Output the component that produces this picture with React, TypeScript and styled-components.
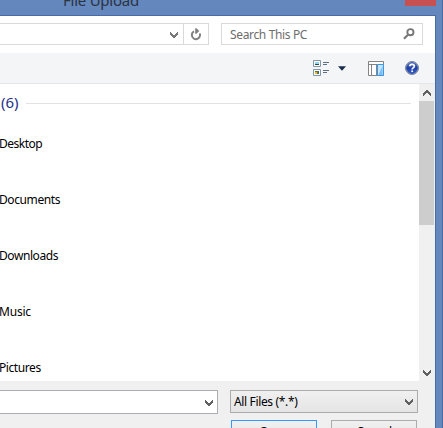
import React from "react";
import styled, { createGlobalStyle } from "styled-components";

const GlobalStyle = createGlobalStyle`
  html, body { margin: 0; padding: 0; overflow: hidden; }
  body { font-family: "Noto Sans", "Open Sans", sans-serif; font-size: 12px; color: #000; }
  * { box-sizing: border-box; }
  svg { display: block; flex: none; }
`;

const Window = styled.div`
  width: 443px;
  height: 428px;
  overflow: hidden;
  display: flex;
  flex-direction: column;
  background: #6487bd;
  border-right: 1px solid #486ca5;
`;

const TitleBar = styled.header`
  height: 15px;
  flex: none;
  display: flex;
  justify-content: space-between;
  padding: 0 6px 0 63px;
`;

const Title = styled.span`
  font-size: 15px;
  line-height: 20px;
  height: 20px;
  margin-top: -10px;
  letter-spacing: -0.25px;
  color: #2b3442;
  white-space: nowrap;
`;

const CloseButton = styled.button`
  width: 31px;
  height: 6px;
  padding: 0;
  border: 0;
  background: #c75050;
`;

const Client = styled.main`
  width: 436px;
  height: 413px;
  flex: none;
  display: flex;
  flex-direction: column;
  background: #fff;
  border-top: 1px solid #486ca5;
  border-right: 1px solid #486ca5;
`;

const AddressRow = styled.div`
  height: 37px;
  flex: none;
  display: flex;
  padding-top: 7px;
`;

const Address = styled.div`
  width: 209px;
  height: 22px;
  display: flex;
  border: 1px solid #d9d9d9;
  border-left: 0;
`;

const AddressField = styled.div`
  width: 184px;
  display: flex;
  align-items: center;
  justify-content: flex-end;
  padding: 1px 5px 0 0;
  border-right: 1px solid #d9d9d9;
`;

const Refresh = styled.div`
  flex: 1;
  display: flex;
  align-items: center;
  justify-content: center;
`;

const Search = styled.div`
  width: 202px;
  height: 22px;
  margin-left: 12px;
  padding: 0 7px 0 8px;
  display: flex;
  align-items: center;
  justify-content: space-between;
  border: 1px solid #d9d9d9;
  color: #6d6d6d;
`;

const Toolbar = styled.div`
  height: 31px;
  flex: none;
  display: flex;
  align-items: center;
  padding-left: 313px;
  background: #f4f5f7;
  border-bottom: 1px solid #e5e7ea;
`;

const ToolIcon = styled.span<{ $gap: number }>`
  margin-right: ${(p) => p.$gap}px;
`;

const Browser = styled.section`
  height: 297px;
  flex: none;
  display: flex;
`;

const Files = styled.div`
  width: 419px;
  overflow: hidden;
`;

const GroupHeader = styled.div`
  height: 38px;
  display: flex;
  align-items: center;
  padding-left: 1px;
`;

const Count = styled.span`
  width: 25px;
  font-size: 15px;
  line-height: 20px;
  padding-bottom: 2px;
  letter-spacing: -0.1px;
  color: #1e3287;
`;

const Rule = styled.div`
  width: 385px;
  height: 1px;
  background: #e2e2e2;
`;

const FileItem = styled.div`
  height: 56px;
  line-height: 18px;
  padding-top: 13px;
  margin-left: -1px;
`;

const Text = styled.span<{ $spacing?: number }>`
  white-space: nowrap;
  letter-spacing: ${(p) => p.$spacing ?? 0}px;
`;

const Scrollbar = styled.div`
  width: 16px;
  display: flex;
  flex-direction: column;
  align-items: flex-start;
  background: #f0f0f0;
`;

const ScrollArrow = styled.div`
  width: 15px;
  height: 17px;
  flex: none;
  display: flex;
  align-items: center;
  justify-content: center;
`;

const Track = styled.div`
  width: 15px;
  flex: 1;
`;

const Thumb = styled.div`
  height: 124px;
  background: #cdcdcd;
`;

const Footer = styled.footer`
  flex: 1;
  overflow: hidden;
  padding-top: 9px;
  background: #f0f0f0;
`;

const Fields = styled.div`
  height: 30px;
  display: flex;
  align-items: flex-start;
`;

const NameField = styled.div`
  width: 218px;
  height: 24px;
  display: flex;
  align-items: center;
  justify-content: flex-end;
  padding: 1px 4px 0 0;
  background: #fff;
  border: 1px solid #abadb3;
  border-left: 0;
`;

const TypeSelect = styled.div`
  width: 188px;
  height: 23px;
  margin-left: 12px;
  padding: 0 4px 0 3px;
  display: flex;
  align-items: center;
  justify-content: space-between;
  background: linear-gradient(#f0f0f0, #e5e5e5);
  border: 1px solid #acacac;
`;

const Actions = styled.div`
  display: flex;
  gap: 14px;
  padding-left: 231px;
`;

const Action = styled.button<{ $primary?: boolean }>`
  width: 86px;
  height: 23px;
  padding: 0;
  font: inherit;
  letter-spacing: -0.3px;
  line-height: 21px;
  color: #000;
  background: linear-gradient(#f0f0f0, #e5e5e5);
  border: 1px solid ${(p) => (p.$primary ? "#3399ff" : "#acacac")};
`;

const Chevron = ({ up = false, color = "#606060" }: { up?: boolean; color?: string }) => (
  <svg width="8" height="6" viewBox="0 0 8 6" fill={color} shapeRendering="crispEdges">
    <path
      transform={up ? "matrix(1 0 0 -1 0 6)" : undefined}
      d="M0 0h1v1h1v1h1v1h2v-1h1v-1h1v-1h1v3h-1v1h-1v1h-1v1h-2v-1h-1v-1h-1v-1h-1z"
    />
  </svg>
);

const RefreshIcon = () => (
  <svg width="12" height="13" viewBox="0 0 12 13" fill="none" stroke="#808080">
    <path d="M4 3.400A4.100 4.100 0 1 0 10 7.200V5.600" strokeWidth="2" />
    <path d="M5.200 0.300H6.500L9.300 3 6.500 5.800H5.200Z" fill="#808080" stroke="none" />
  </svg>
);

const SearchIcon = () => (
  <svg width="12" height="12" viewBox="0 0 12 12" fill="none" stroke="#777">
    <circle cx="7.4" cy="4.2" r="3.1" strokeWidth="1.9" />
    <path d="M5 6.8L1 10.8" strokeWidth="2.2" />
  </svg>
);

const ViewIcon = () => (
  <svg width="17" height="16" viewBox="0 0 17 16">
    <g fill="#fff" stroke="#8495a8">
      <path d="M.5.5h7v6h-7zM.5 9.500h7v6h-7z" />
    </g>
    <path d="M2 2h4v2H2z" fill="#91d5ef" />
    <path d="M2 4h4v1H2z" fill="#294b4a" />
    <path d="M2 11h2v1H2zM4 13h2v1H4z" fill="#258b35" />
    <path d="M4 11h1v2H4z" fill="#df4937" />
    <path d="M2 12h2v2H2z" fill="#e8bb2a" />
    <path d="M5 11h1v2H5z" fill="#275dbd" />
    <path d="M10 2.500h6M10 4.500h4M10 10.500h6M10 12.500h4" stroke="#5d6f86" />
  </svg>
);

const DropIcon = () => (
  <svg width="8" height="5" viewBox="0 0 8 5">
    <path d="M0 .3h8L4 4.700z" fill="#172c4c" />
  </svg>
);

const PaneIcon = () => (
  <svg width="16" height="15" viewBox="0 0 16 15">
    <path d="M.5.5h15v14H.5z" fill="#fff" stroke="#858585" />
    <path d="M1 3.500h14M3.500 4v10M8.500 4v10" stroke="#858585" fill="none" />
    <path d="M9.500 3.500h6v11h-6z" fill="#c2e4ff" stroke="#3b97e6" />
    <path d="M14.500 5v9h-4z" fill="#79bdf7" />
  </svg>
);

const HelpIcon = () => (
  <svg width="14" height="14" viewBox="0 0 14 14">
    <defs>
      <linearGradient id="help" x1="0" y1="0" x2="0" y2="1">
        <stop offset="0" stopColor="#6f8bd8" />
        <stop offset=".5" stopColor="#1d3da8" />
        <stop offset="1" stopColor="#3a66cf" />
      </linearGradient>
    </defs>
    <circle cx="7" cy="7" r="6.500" fill="#c9d1df" stroke="#76839b" />
    <circle cx="7" cy="7" r="5.500" fill="url(#help)" stroke="#263e97" strokeWidth=".7" />
    <path d="M4.800 5.300c.1-2.700 4.500-2.500 4.500-.1C9.300 6.800 7.100 6.800 7.100 8.400" fill="none" stroke="#fff" strokeWidth="1.600" />
    <path d="M6.300 9.400h1.700V11H6.300z" fill="#fff" />
  </svg>
);

const files = [
  { name: "Desktop", spacing: -0.5 },
  { name: "Documents", spacing: -0.4 },
  { name: "Downloads", spacing: -0.42 },
  { name: "Music", spacing: -0.2 },
  { name: "Pictures", spacing: -0.42 },
];

export default function App() {
  return (
    <>
      <GlobalStyle />
      <Window>
        <TitleBar>
          <Title>File Upload</Title>
          <CloseButton aria-label="Close" />
        </TitleBar>
        <Client>
          <AddressRow>
            <Address>
              <AddressField><Chevron color="#777" /></AddressField>
              <Refresh><RefreshIcon /></Refresh>
            </Address>
            <Search>
              <Text $spacing={-0.35}>Search This PC</Text>
              <SearchIcon />
            </Search>
          </AddressRow>
          <Toolbar>
            <ToolIcon $gap={8}><ViewIcon /></ToolIcon>
            <ToolIcon $gap={22}><DropIcon /></ToolIcon>
            <ToolIcon $gap={21}><PaneIcon /></ToolIcon>
            <ToolIcon $gap={0}><HelpIcon /></ToolIcon>
          </Toolbar>
          <Browser>
            <Files>
              <GroupHeader>
                <Count>(6)</Count>
                <Rule />
              </GroupHeader>
              {files.map((f) => (
                <FileItem key={f.name}><Text $spacing={f.spacing}>{f.name}</Text></FileItem>
              ))}
            </Files>
            <Scrollbar>
              <ScrollArrow><Chevron up /></ScrollArrow>
              <Track><Thumb /></Track>
              <ScrollArrow><Chevron /></ScrollArrow>
            </Scrollbar>
          </Browser>
          <Footer>
            <Fields>
              <NameField><Chevron /></NameField>
              <TypeSelect>
                <Text $spacing={-0.35}>All Files (*.*)</Text>
                <Chevron />
              </TypeSelect>
            </Fields>
            <Actions>
              <Action $primary>Open</Action>
              <Action>Cancel</Action>
            </Actions>
          </Footer>
        </Client>
      </Window>
    </>
  );
}
